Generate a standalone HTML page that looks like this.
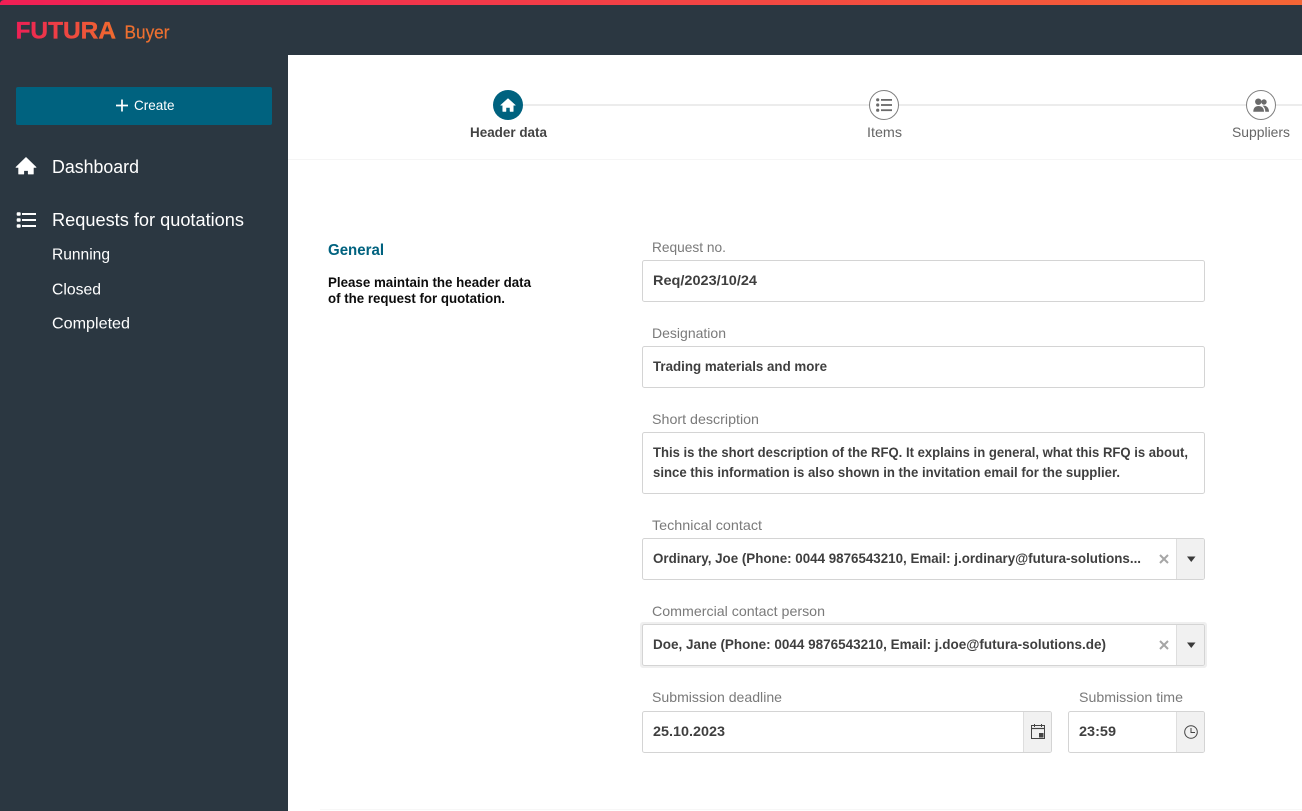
<!DOCTYPE html>
<html lang="en">
<head>
<meta charset="utf-8">
<title>FUTURA Buyer</title>
<style>
html,body{margin:0;padding:0;background:#fff;width:1302px;height:811px;overflow:hidden}
svg{display:block;position:absolute;left:0;top:0}
text{font-family:"Liberation Sans",Arial,sans-serif}
.l{font-size:14px;fill:#7a7a7a}
.v{font-size:14px;font-weight:bold;fill:#3f3f3f}
.n{fill:#fff}
.box{fill:#fff;stroke:#d4d4d4;stroke-width:1}
.add{fill:#f1f1f1}
.sep{stroke:#dedede;stroke-width:1}
</style>
</head>
<body>
<svg width="1302" height="811" viewBox="0 0 1302 811" xmlns="http://www.w3.org/2000/svg">
<defs>
<linearGradient id="top" x1="0" x2="1" y1="0" y2="0"><stop offset="0" stop-color="#f01f55"/><stop offset="1" stop-color="#f46535"/></linearGradient>
<linearGradient id="logo" gradientUnits="userSpaceOnUse" x1="15" x2="122" y1="0" y2="0"><stop offset="0" stop-color="#ed1f55"/><stop offset="1" stop-color="#f0702c"/></linearGradient>
</defs>
<rect width="1302" height="811" fill="#fff"/>
<rect width="1302" height="55" fill="#2b3741"/>
<rect width="288" height="811" fill="#2b3741"/>
<path d="M0 5V3Q1 0 4 0H1302V5Z" fill="url(#top)"/>
<text x="15.500" y="38.500" font-size="24.500" font-weight="bold" fill="url(#logo)" stroke="url(#logo)" stroke-width=".35" textLength="100.500" lengthAdjust="spacingAndGlyphs">FUTURA</text>
<text x="124.500" y="38.500" font-size="18.500" fill="#ee7030" stroke="#ee7030" stroke-width=".2" textLength="45" lengthAdjust="spacingAndGlyphs">Buyer</text>

<rect x="16" y="87" width="256" height="38" rx="2" fill="#00627f"/>
<path d="M122 99.500V111.500M116 105.500H128" stroke="#fff" stroke-width="1.700"/>
<text x="134" y="110" font-size="14" class="n" textLength="40.500" lengthAdjust="spacingAndGlyphs">Create</text>

<path d="M26 157.500L36 167.300H33.300V174H28.300V170.500H23.700V174H18.700V167.300H16Z" fill="#fff" stroke="#fff" stroke-width=".8" stroke-linejoin="round"/>
<text x="52" y="173" font-size="18" class="n" textLength="87" lengthAdjust="spacingAndGlyphs">Dashboard</text>

<g fill="#fff"><rect x="16.700" y="212.300" width="4" height="3.500" rx="1"/><rect x="16.700" y="218.300" width="4" height="3.500" rx="1"/><rect x="16.700" y="224.300" width="4" height="3.500" rx="1"/><rect x="22" y="213" width="14" height="2"/><rect x="22" y="219" width="14" height="2"/><rect x="22" y="225" width="14" height="2"/></g>
<text x="52" y="226" font-size="18" class="n" textLength="192" lengthAdjust="spacingAndGlyphs">Requests for quotations</text>
<text x="52" y="259.500" font-size="16" class="n" textLength="58" lengthAdjust="spacingAndGlyphs">Running</text>
<text x="52" y="294.500" font-size="16" class="n" textLength="49" lengthAdjust="spacingAndGlyphs">Closed</text>
<text x="52" y="328.500" font-size="16" class="n" textLength="78" lengthAdjust="spacingAndGlyphs">Completed</text>

<rect x="523" y="104" width="779" height="2" fill="#ececec"/>
<rect x="288" y="159" width="1014" height="1" fill="#f5f5f5"/>
<rect x="320" y="809" width="982" height="1" fill="#f7f7f7"/>

<circle cx="508" cy="105" r="15" fill="#00627f"/>
<path d="M508 98.500L515.500 105.300H513.300V111.500H510V107.500H506V111.500H502.700V105.300H500.500Z" fill="#fff" stroke="#fff" stroke-width=".5" stroke-linejoin="round"/>
<text x="470" y="137" font-size="14" font-weight="bold" fill="#444" textLength="77" lengthAdjust="spacingAndGlyphs">Header data</text>

<circle cx="884" cy="105" r="14.500" fill="#fff" stroke="#808080" stroke-width="1"/>
<g fill="#6a6a6a"><circle cx="877.700" cy="99.800" r="1.600"/><circle cx="877.700" cy="105" r="1.600"/><circle cx="877.700" cy="110.200" r="1.600"/><rect x="881" y="99" width="11" height="1.800"/><rect x="881" y="104.100" width="11" height="1.800"/><rect x="881" y="109.300" width="11" height="1.800"/></g>
<text x="867" y="137" font-size="14" fill="#666" textLength="35" lengthAdjust="spacingAndGlyphs">Items</text>

<circle cx="1261" cy="105" r="14.500" fill="#fff" stroke="#808080" stroke-width="1"/>
<g fill="#6a6a6a"><circle cx="1258.300" cy="101.700" r="3.200"/><circle cx="1264" cy="102" r="2.700"/><path d="M1253.300 111.700C1253.300 107.800 1255.500 106 1258.500 106C1261.500 106 1264 107.800 1264 111.700Z"/><path d="M1262.500 105.800C1266 105 1269 107.500 1269 111.700H1265.300C1265.300 109 1264.300 107 1262.500 105.800Z"/></g>
<text x="1232" y="137" font-size="14" fill="#666" textLength="58" lengthAdjust="spacingAndGlyphs">Suppliers</text>

<text x="328" y="255" font-size="16" font-weight="bold" fill="#00627f" textLength="56" lengthAdjust="spacingAndGlyphs">General</text>
<text x="328" y="287" font-size="14" font-weight="bold" fill="#0c0c0c" textLength="203" lengthAdjust="spacingAndGlyphs">Please maintain the header data</text>
<text x="328" y="303" font-size="14" font-weight="bold" fill="#0c0c0c" textLength="177" lengthAdjust="spacingAndGlyphs">of the request for quotation.</text>

<text class="l" x="652" y="252" textLength="74" lengthAdjust="spacingAndGlyphs">Request no.</text>
<rect class="box" x="642.500" y="260.500" width="562" height="41" rx="2"/>
<text class="v" x="653" y="285" textLength="104" lengthAdjust="spacingAndGlyphs">Req/2023/10/24</text>

<text class="l" x="652" y="338" textLength="74" lengthAdjust="spacingAndGlyphs">Designation</text>
<rect class="box" x="642.500" y="346.500" width="562" height="41" rx="2"/>
<text class="v" x="653" y="371" textLength="174" lengthAdjust="spacingAndGlyphs">Trading materials and more</text>

<text class="l" x="652" y="424" textLength="107" lengthAdjust="spacingAndGlyphs">Short description</text>
<rect class="box" x="642.500" y="432.500" width="562" height="61" rx="2"/>
<text class="v" x="653" y="457" textLength="535" lengthAdjust="spacingAndGlyphs">This is the short description of the RFQ. It explains in general, what this RFQ is about,</text>
<text class="v" x="653" y="477" textLength="467" lengthAdjust="spacingAndGlyphs">since this information is also shown in the invitation email for the supplier.</text>

<text class="l" x="652" y="530" textLength="110" lengthAdjust="spacingAndGlyphs">Technical contact</text>
<rect class="box" x="642.500" y="538.500" width="562" height="41" rx="2"/>
<path class="add" d="M1176.500 539H1202.500Q1204 539 1204 541V577Q1204 579 1202.500 579H1176.500Z"/>
<path class="sep" d="M1176.500 539V579"/>
<text class="v" x="653" y="563" textLength="488" lengthAdjust="spacingAndGlyphs">Ordinary, Joe (Phone: 0044 9876543210, Email: j.ordinary@futura-solutions...</text>
<path d="M1160 555L1168 563M1168 555L1160 563" stroke="#a6a6a6" stroke-width="2"/>
<path d="M1187 556.500H1195.500L1191.250 562Z" fill="#3a3a3a"/>

<text class="l" x="652" y="616" textLength="173" lengthAdjust="spacingAndGlyphs">Commercial contact person</text>
<rect x="640" y="622" width="567" height="46" rx="3" fill="#efefef"/>
<rect class="box" x="642.500" y="624.500" width="562" height="41" rx="2"/>
<path class="add" d="M1176.500 625H1202.500Q1204 625 1204 627V663Q1204 665 1202.500 665H1176.500Z"/>
<path class="sep" d="M1176.500 625V665"/>
<text class="v" x="653" y="649" textLength="453" lengthAdjust="spacingAndGlyphs">Doe, Jane (Phone: 0044 9876543210, Email: j.doe@futura-solutions.de)</text>
<path d="M1160 641L1168 649M1168 641L1160 649" stroke="#a6a6a6" stroke-width="2"/>
<path d="M1187 642.500H1195.500L1191.250 648Z" fill="#3a3a3a"/>

<text class="l" x="652" y="702" textLength="130" lengthAdjust="spacingAndGlyphs">Submission deadline</text>
<rect class="box" x="642.500" y="711.500" width="409" height="41" rx="2"/>
<path class="add" d="M1023.500 712H1049.500Q1051 712 1051 714V750Q1051 752 1049.500 752H1023.500Z"/>
<path class="sep" d="M1023.500 712V752"/>
<text class="v" x="653" y="736" textLength="72" lengthAdjust="spacingAndGlyphs">25.10.2023</text>
<g fill="none" stroke="#444" stroke-width="1"><rect x="1031.500" y="725.500" width="13" height="13"/><path d="M1031.500 728.500H1044.500" stroke-width="1.200"/><path d="M1034.500 724V727M1041.500 724V727"/></g>
<rect x="1039" y="733" width="4.500" height="4.500" fill="#444"/>

<text class="l" x="1079" y="702" textLength="104" lengthAdjust="spacingAndGlyphs">Submission time</text>
<rect class="box" x="1068.500" y="711.500" width="136" height="41" rx="2"/>
<path class="add" d="M1176.500 712H1202.500Q1204 712 1204 714V750Q1204 752 1202.500 752H1176.500Z"/>
<path class="sep" d="M1176.500 712V752"/>
<text class="v" x="1079" y="736" textLength="37" lengthAdjust="spacingAndGlyphs">23:59</text>
<circle cx="1191" cy="732" r="6.300" fill="none" stroke="#444" stroke-width="1"/>
<path d="M1191 728V732.500H1195" fill="none" stroke="#444" stroke-width="1"/>
</svg>
</body>
</html>
